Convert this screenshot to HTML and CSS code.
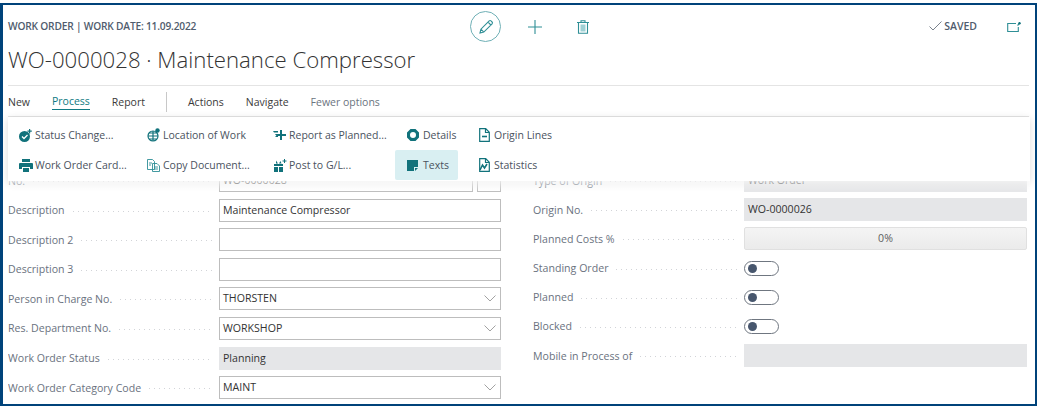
FILE: index.html
```html
<!DOCTYPE html>
<html lang="en">
<head>
<meta charset="utf-8">
<title>Work Order</title>
<link rel="stylesheet" href="styles.css">
</head>
<body>
<main class="frame">
  <header class="head">
    <div class="head-text">
      <div class="caption">WORK ORDER | WORK DATE: 11.09.2022</div>
      <h1 class="title">WO-0000028 · Maintenance Compressor</h1>
    </div>
    <div class="tools">
      <span class="tool-edit">
        <svg width="18" height="18" viewBox="0 0 18 18" class="ico-line"><path d="M3 15l.9-3.800L12.200 2.900a1.300 1.300 0 0 1 1.800 0l1.100 1.100a1.300 1.300 0 0 1 0 1.800L6.800 14.100 3 15zM3.900 11.200l2.900 2.900M11 4.100l2.900 2.900"/></svg>
      </span>
      <svg width="14" height="14" viewBox="0 0 14 14" class="ico-line tool-plus"><path d="M7 0v14M0 7h14"/></svg>
      <svg width="12" height="14" viewBox="0 0 12 14" class="ico-line tool-bin"><path d="M0 2.500h12M4 2.500V.8h4v1.700M1.500 2.500v10.700h9V2.500"/><rect x="3.500" y="4.500" width="5" height="7" class="ico-soft"/></svg>
    </div>
    <div class="status">
      <svg width="13" height="10" viewBox="0 0 13 10" class="ico-check"><path d="M.5 5.500l3.500 3.500L12.500.5"/></svg>
      <span>SAVED</span>
    </div>
    <svg width="14" height="10" viewBox="0 0 14 10" class="ico-line tool-open"><path d="M9 1.500H.7v8h10.600V5"/><path d="M10.500 3.500 13 1"/><circle cx="12.500" cy="1.200" r="1.200" class="ico-dot"/></svg>
  </header>

  <nav class="menu">
    <span class="menu-item">New</span>
    <span class="menu-item is-active">Process</span>
    <span class="menu-item">Report</span>
    <span class="menu-sep"></span>
    <span class="menu-item">Actions</span>
    <span class="menu-item">Navigate</span>
    <span class="menu-item is-muted">Fewer options</span>
  </nav>

  <section class="actions">
    <div class="action">
      <svg width="13" height="13" viewBox="0 0 13 13" class="ico-fill"><circle cx="5.500" cy="7.500" r="5.500"/><path d="M3 7.500l2 2 3.500-3.500" class="ico-knock"/><path d="M10 0h1.200v1.600h1.600v1.200h-1.600v1.600H10V2.800H8.400V1.600H10z"/></svg>
      <span>Status Change...</span>
    </div>
    <div class="action">
      <svg width="13" height="14" viewBox="0 0 13 14" class="ico-line-dark"><circle cx="6" cy="8" r="5"/><path d="M1 8h10M6 3v10M2.500 5h7M2.500 11h7"/><circle cx="10.500" cy="2.500" r="2.200" class="ico-dot"/></svg>
      <span>Location of Work</span>
    </div>
    <div class="action">
      <svg width="13" height="12" viewBox="0 0 13 12" class="ico-fill"><path d="M7 1h2v4h4v2H9v4H7V7H3.500L2 5h5z"/><path d="M0 2h5v1.500H1zM2 7h3v1H3z"/></svg>
      <span>Report as Planned...</span>
    </div>
    <div class="action">
      <svg width="12" height="12" viewBox="0 0 12 12" class="ico-fill"><path fill-rule="evenodd" d="M3.500 0h5L12 3.500v5L8.500 12h-5L0 8.500v-5zM6 3a3 3 0 1 0 0 6 3 3 0 0 0 0-6z"/></svg>
      <span>Details</span>
    </div>
    <div class="action action-end">
      <svg width="11" height="14" viewBox="0 0 11 14" class="ico-line-dark"><path d="M.7.700h6l3.600 3.600v9H.7zM6.500.700v3.800h3.800"/><path d="M3 8.500h5" class="ico-thick"/></svg>
      <span>Origin Lines</span>
    </div>

    <div class="action">
      <svg width="14" height="13" viewBox="0 0 14 13" class="ico-fill"><path d="M3 0h8v3H3zM1 4h12a1 1 0 0 1 1 1v5h-3V8H3v2H0V5a1 1 0 0 1 1-1zM4 9h6v4H4z"/></svg>
      <span>Work Order Card...</span>
    </div>
    <div class="action">
      <svg width="13" height="13" viewBox="0 0 13 13" class="ico-thin"><path d="M.5.500h5l2 2v8h-7zM5.500 4.500h4.500l2.500 2.500v5.500h-7z"/><path d="M2 4h3M2 6h2M7 8h4M7 10h4"/></svg>
      <span>Copy Document...</span>
    </div>
    <div class="action">
      <svg width="14" height="13" viewBox="0 0 14 13" class="ico-fill"><path d="M1 5h9v2H1zM1 8h4v5H1zM6 8h4v5H6zM3 1.500l2 3H3zM6 4.500l1.500-2.500 1 2.500z"/><path d="M11 0h1v1.500h1.500v1H12V4h-1V2.500H9.500v-1H11z"/></svg>
      <span>Post to G/L...</span>
    </div>
    <div class="action is-selected">
      <svg width="11" height="11" viewBox="0 0 11 11" class="ico-fill"><path d="M0 0h11v7H7v4H0z"/><path d="M8 8h3l-3 3z"/></svg>
      <span>Texts</span>
    </div>
    <div class="action action-end">
      <svg width="11" height="14" viewBox="0 0 11 14" class="ico-line-dark"><path d="M.7.700h6l3.600 3.600v9H.7zM6.500.700v3.800h3.800"/><path d="M1 12l2.500-5 2 3L8 6" class="ico-thick"/></svg>
      <span>Statistics</span>
    </div>
  </section>

  <section class="form">
    <div class="col">
      <div class="row">
        <label class="label">No.</label>
        <div class="pair"><div class="field">WO-0000028</div><div class="field field-mini"></div></div>
      </div>
      <div class="row"><label class="label">Description</label><div class="field">Maintenance Compressor</div></div>
      <div class="row"><label class="label">Description 2</label><div class="field"></div></div>
      <div class="row"><label class="label">Description 3</label><div class="field"></div></div>
      <div class="row"><label class="label">Person in Charge No.</label><div class="field field-select">THORSTEN<svg width="12" height="7" viewBox="0 0 12 7" class="chev"><path d="M.5.500 6 6l5.500-5.500"/></svg></div></div>
      <div class="row"><label class="label">Res. Department No.</label><div class="field field-select">WORKSHOP<svg width="12" height="7" viewBox="0 0 12 7" class="chev"><path d="M.5.500 6 6l5.500-5.500"/></svg></div></div>
      <div class="row"><label class="label">Work Order Status</label><div class="field field-ro">Planning</div></div>
      <div class="row"><label class="label">Work Order Category Code</label><div class="field field-select">MAINT<svg width="12" height="7" viewBox="0 0 12 7" class="chev"><path d="M.5.500 6 6l5.500-5.500"/></svg></div></div>
    </div>
    <div class="col col-tight">
      <div class="row"><label class="label">Type of Origin</label><div class="field field-ro">Work Order</div></div>
      <div class="row"><label class="label">Origin No.</label><div class="field field-ro">WO-0000026</div></div>
      <div class="row"><label class="label">Planned Costs %</label><div class="field field-bar">0%</div></div>
      <div class="row"><label class="label">Standing Order</label><span class="toggle"></span></div>
      <div class="row"><label class="label">Planned</label><span class="toggle"></span></div>
      <div class="row"><label class="label">Blocked</label><span class="toggle"></span></div>
      <div class="row"><label class="label">Mobile in Process of</label><div class="field field-ro"></div></div>
    </div>
  </section>
</main>
</body>
</html>
```
FILE: styles.css
```css
* { box-sizing: border-box; }
html, body { margin: 0; padding: 0; background: #fff; }
body {
  width: 1040px;
  height: 410px;
  overflow: hidden;
  font-family: "Open Sans", "Noto Sans", sans-serif;
  color: #212121;
}
.frame {
  position: relative;
  width: 1037px;
  height: 403px;
  margin-top: 3px;
  border: solid #00437a;
  border-width: 2px 2px 2px 3px;
  padding: 0 6px 0 5px;
  overflow: hidden;
}

/* Header */
.head {
  display: flex;
  align-items: flex-start;
  height: 81px;
  border-bottom: 1px solid #e4e4e4;
}
.head-text { width: 462px; }
.caption {
  margin-top: 14px;
  font-size: 10.2px;
  line-height: 14px;
  font-weight: 600;
  color: #505c6d;
  letter-spacing: -.2px;
}
.title {
  margin: 11px 0 0;
  font-size: 22.2px;
  line-height: 32px;
  font-weight: 300;
  color: #333;
  white-space: nowrap;
}
.tools { display: flex; align-items: center; margin-top: 6px; height: 31px; }
.tool-edit {
  display: flex;
  align-items: center;
  justify-content: center;
  width: 31px;
  height: 31px;
  border: 1px solid #6fb0b6;
  border-radius: 50%;
}
.tool-plus { margin-left: 27px; }
.tool-bin { margin-left: 35px; }
.status {
  display: flex;
  align-items: center;
  gap: 2px;
  margin: 14px 0 0 auto;
  font-size: 10.5px;
  line-height: 14px;
  font-weight: 600;
  color: #505c6d;
}
.tool-open { margin: 17px 8px 0 30px; }
.ico-line { fill: none; stroke: #2f8f96; stroke-width: 1.1; }
.ico-soft { fill: #9fd0d4; stroke: none; }
.ico-check { fill: none; stroke: #6b7480; stroke-width: .9; }
.ico-fill { fill: #11727b; }
.ico-knock { fill: none; stroke: #fff; stroke-width: 1.3; }
.ico-line-dark { fill: none; stroke: #11727b; stroke-width: 1.2; }
.ico-thick { stroke-width: 1.6; }
.ico-dot { fill: #11727b; stroke: none; }
.ico-thin { fill: none; stroke: #2f8f96; stroke-width: .9; }

/* Menu */
.menu {
  display: flex;
  align-items: center;
  height: 31px;
  padding-top: 1px;
  border-bottom: 1px solid #e4e4e4;
  font-size: 10.5px;
  color: #3a3a3a;
}
.menu-item { margin-right: 22px; line-height: 16px; }
.is-active { color: #0f7a83; border-bottom: 1px solid #0f7a83; line-height: 15px; }
.is-muted { color: #6b7480; }
.menu-sep { width: 1px; height: 20px; background: #c8c8c8; margin: 0 21px 0 -1px; }

/* Action panel */
.actions {
  position: absolute;
  z-index: 2;
  left: 5px;
  top: 112px;
  width: 1022px;
  height: 64px;
  padding: 3px 0 0;
  display: grid;
  grid-template-columns: 127px 126px 134px 72px auto;
  grid-auto-rows: 30px;
  background: #fff;
  box-shadow: 0 2px 8px rgba(0, 0, 0, .14);
  font-size: 10.5px;
  color: #4a525e;
}
.actions::after {
  content: "";
  position: absolute;
  left: 0;
  right: 0;
  top: 100%;
  height: 11px;
  background: linear-gradient(rgba(255, 255, 255, .7), rgba(255, 255, 255, 0));
}
.action {
  display: grid;
  grid-template-columns: 16px auto;
  align-items: center;
  padding-left: 12px;
  white-space: nowrap;
}
.action:nth-child(5n + 1) { padding-left: 11px; }
.action-end { grid-template-columns: 15px auto; }
.is-selected { background: #d9eff2; margin-right: 9px; border-radius: 2px; }

/* Form */
.form {
  display: grid;
  grid-template-columns: 493px 494px;
  column-gap: 32px;
  padding-top: 52px;
}
.col { display: flex; flex-direction: column; gap: 6.6px; }
.col-tight { gap: 6.2px; }
.row {
  display: grid;
  grid-template-columns: 211px 1fr;
  align-items: center;
  height: 23px;
  font-size: 10.6px;
}
.label {
  display: flex;
  align-items: center;
  margin-right: 6px;
  color: #6a7280;
  white-space: nowrap;
  overflow: hidden;
}
.label::after {
  content: "";
  flex: 1;
  height: 1px;
  margin: 2px 0 0 8px;
  background: repeating-linear-gradient(90deg, #d2d4d8 0 1px, transparent 1px 5px);
}
.field {
  position: relative;
  height: 23px;
  padding: 0 3px;
  border: 1px solid #bdbdbd;
  line-height: 21px;
  font-size: 10.6px;
  color: #333;
  background: #fff;
}
.pair { display: grid; grid-template-columns: 254px 24px; column-gap: 4px; }
.field-select { display: flex; align-items: center; justify-content: space-between; padding-right: 4px; }
.chev { fill: none; stroke: #8a8a8a; stroke-width: .8; }
.field-ro { background: #e5e6e8; border-color: #e5e6e8; }
.field-bar {
  text-align: center;
  background: linear-gradient(#f4f4f4, #ebebeb);
  border-color: #e0e0e0;
  border-radius: 2px;
  color: #5c5c5c;
}
.toggle {
  position: relative;
  display: block;
  width: 35px;
  height: 15px;
  border: 1px solid #6f7680;
  border-radius: 8px;
  background: #fff;
}
.toggle::before {
  content: "";
  position: absolute;
  left: 3px;
  top: 2px;
  width: 9px;
  height: 9px;
  border-radius: 50%;
  background: #47566d;
}
```
